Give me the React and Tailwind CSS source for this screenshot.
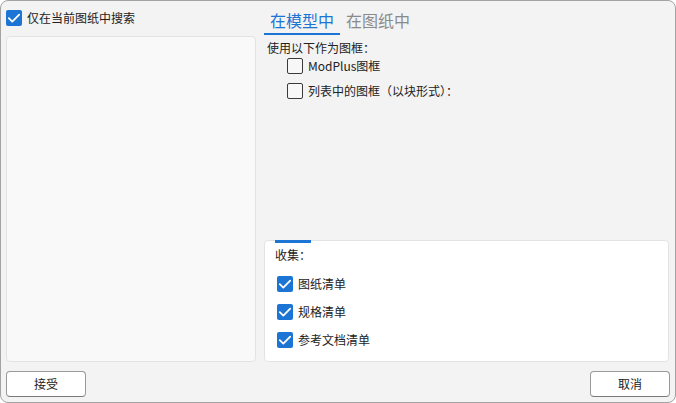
const BLUE = "bg-[#1c74d4]";

const Check = ({ checked }) =>
  checked ? (
    <span className="w-4 h-4 rounded-[2px] bg-[#1c74d4] flex items-center justify-center shrink-0">
      <svg width="16" height="16" viewBox="0 0 16 16" fill="none">
        <path d="M2.8 8.2 L6.3 11.6 L13.2 4.6" stroke="#fff" strokeWidth="1.8" strokeLinecap="round" strokeLinejoin="round" />
      </svg>
    </span>
  ) : (
    <span className="w-4 h-4 rounded-[2px] border border-[#3a3a3a] bg-[#f7f7f7] shrink-0" />
  );

const CheckRow = ({ checked, label, className = "" }) => (
  <div className={`flex items-center gap-[5px] h-4 ${className}`}>
    <Check checked={checked} />
    <span className="text-[12px] leading-4 text-[#222]">{label}</span>
  </div>
);

const Button = ({ children }) => (
  <button className="w-[80px] h-[26px] rounded-[4px] border border-[#9a9a9a] border-b-[#7a7a7a] bg-white text-[12px] text-[#1b1b1b]">
    {children}
  </button>
);

export default function App() {
  return (
    <div
      className="w-[676px] h-[403px] flex flex-col border border-[#a3a3a3] rounded-lg bg-[#f3f3f3] px-[5px] pt-[9px] pb-[5px] overflow-hidden"
      style={{ fontFamily: '"Noto Sans CJK SC", "Noto Sans", sans-serif' }}
    >
      <div className="flex flex-1 gap-2 min-h-0">
        {/* Left column */}
        <div className="w-[250px] flex flex-col">
          <CheckRow checked label="仅在当前图纸中搜索" />
          <div className="mt-[10px] flex-1 rounded-[4px] border border-[#e3e3e3] bg-[#f9f9f9]" />
        </div>

        {/* Right column */}
        <div className="w-[405px] flex flex-col">
          <div className="flex">
            <div className="px-[6px] pb-[3px] border-b-2 border-[#1c74d4] text-[16px] leading-5 text-[#1c74d4]">
              在模型中
            </div>
            <div className="px-[6px] pb-[3px] text-[16px] leading-5 text-[#8a8a8a]">在图纸中</div>
          </div>
          <div className="pl-[3px] mt-[5px] text-[12px] leading-4 text-[#222]">使用以下作为图框：&nbsp;</div>
          <div className="pl-[23px] mt-[2px] flex flex-col gap-[9px]">
            <CheckRow label="ModPlus图框" />
            <CheckRow label="列表中的图框（以块形式）：" />
          </div>

          <div className="mt-auto h-[122px] rounded-[4px] border border-[#e3e3e3] bg-white flex flex-col pl-[10px]">
            <div className={`-mt-px w-[36px] h-[3px] ${BLUE}`} />
            <div className="mt-[4px] text-[12px] leading-4 text-[#222]">收集：</div>
            <div className="mt-[13px] ml-[2px] flex flex-col gap-3">
              <CheckRow checked label="图纸清单" />
              <CheckRow checked label="规格清单" />
              <CheckRow checked label="参考文档清单" />
            </div>
          </div>
        </div>
      </div>

      <div className="flex justify-between mt-[9px]">
        <Button>接受</Button>
        <Button>取消</Button>
      </div>
    </div>
  );
}
